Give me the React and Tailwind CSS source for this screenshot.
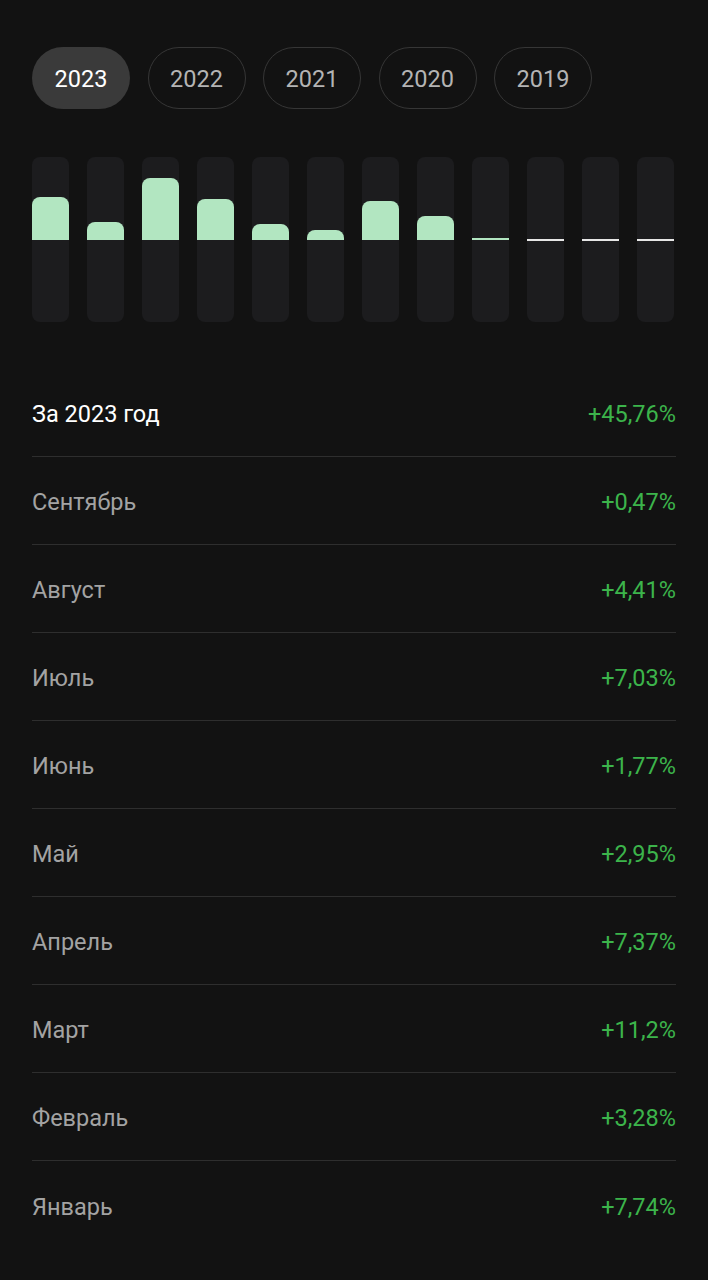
import React from "react";

const years = ["2023", "2022", "2021", "2020", "2019"];
const bars = [7.74, 3.28, 11.2, 7.37, 2.95, 1.77, 7.03, 4.41, 0.47, null, null, null];
const rows = [
  ["Сентябрь", "+0,47%"],
  ["Август", "+4,41%"],
  ["Июль", "+7,03%"],
  ["Июнь", "+1,77%"],
  ["Май", "+2,95%"],
  ["Апрель", "+7,37%"],
  ["Март", "+11,2%"],
  ["Февраль", "+3,28%"],
  ["Январь", "+7,74%"],
];

export default function App() {
  return (
    <div
      className="min-h-[1280px] w-[708px] bg-[#121212] px-8 pt-[47px]"
      style={{ fontFamily: "Roboto, 'Noto Sans', sans-serif" }}
    >
      <div className="flex gap-[17.5px]">
        {years.map((y, i) => (
          <div
            key={y}
            className={
              i === 0
                ? "flex h-[62px] w-[98px] items-center justify-center rounded-full bg-[#3a3a3a] pt-[3px] text-[23.5px] text-white"
                : "flex h-[62px] w-[98px] items-center justify-center rounded-full border-[1.5px] border-[#363636] pt-[3px] text-[23.5px] text-[#b4b4b4]"
            }
          >
            {y}
          </div>
        ))}
      </div>

      <div className="mt-[48px] grid w-[642px] grid-cols-12 gap-[18px]">
        {bars.map((v, i) => (
          <div key={i} className="flex h-[165px] flex-col overflow-hidden rounded-lg bg-[#1c1c1e]">
            <div className="flex h-[83px] flex-col justify-end">
              {v === null ? null : v < 1 ? (
                <div className="h-[2px] bg-[#b2e6c1]" />
              ) : (
                <div
                  className="rounded-t-lg bg-[#b2e6c1]"
                  style={{ height: `${Math.round(v * 5.55)}px` }}
                />
              )}
            </div>
            {v === null ? <div className="-mt-[1px] h-[2px] bg-[#e6e6e6]" /> : null}
          </div>
        ))}
      </div>

      <div className="mt-[47px] w-[644px]">
        <div className="flex h-[88px] items-center justify-between border-b border-[#2e2e2e] pt-[5px] text-[23.5px]">
          <span className="text-white">За 2023 год</span>
          <span className="text-[#3cb44b]">+45,76%</span>
        </div>
        {rows.map(([m, v], i) => (
          <div
            key={m}
            className={
              i === rows.length - 1
                ? "flex h-[88px] items-center justify-between pt-[5px] text-[23.5px]"
                : "flex h-[88px] items-center justify-between border-b border-[#2e2e2e] pt-[5px] text-[23.5px]"
            }
          >
            <span className="text-[#a3a3a3]">{m}</span>
            <span className="text-[#3cb44b]">{v}</span>
          </div>
        ))}
      </div>
    </div>
  );
}
